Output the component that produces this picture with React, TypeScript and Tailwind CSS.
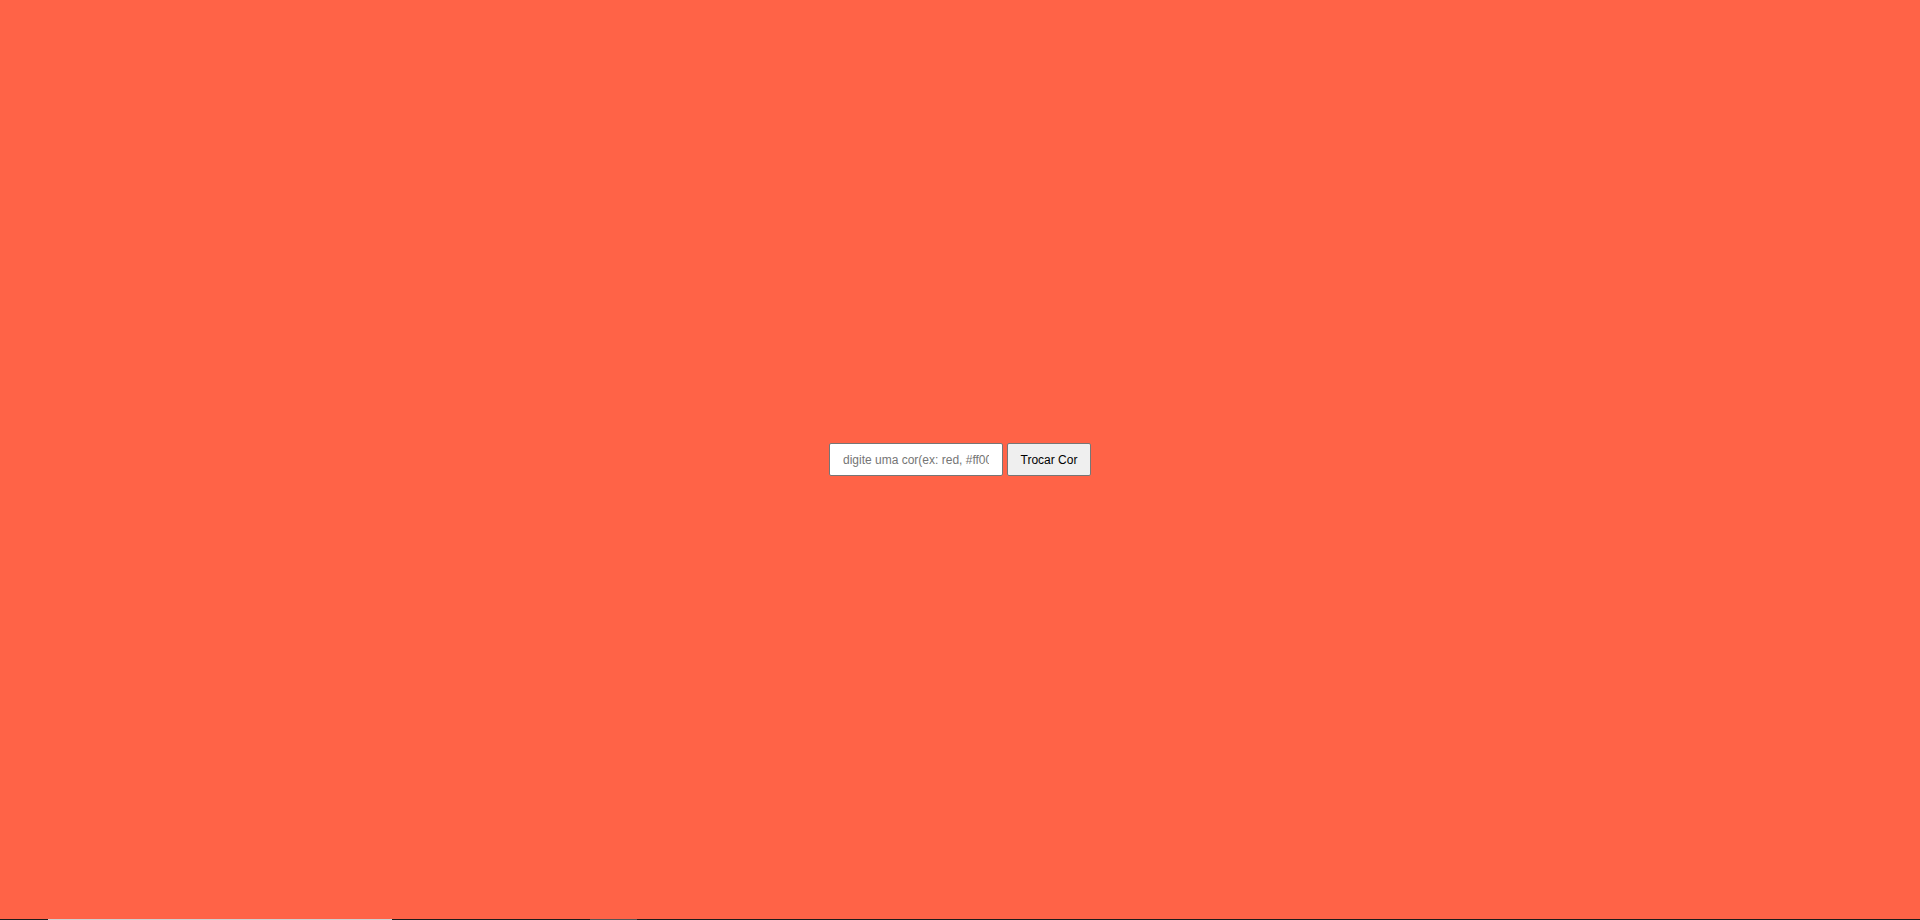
import React, { useState } from 'react';

const App: React.FC = () => {
  const [cor, setCor] = useState('');
  const [fundo, setFundo] = useState('tomato');

  const trocarCor = () => {
    if (cor.trim()) setFundo(cor.trim());
  };

  return (
    <div className="flex h-screen w-full flex-col" style={{ fontFamily: '"Liberation Sans", Arial, sans-serif' }}>
      {/* Area principal */}
      <div className="flex flex-1 items-center justify-center gap-[4px]" style={{ backgroundColor: fundo }}>
        <input
          type="text"
          value={cor}
          onChange={(e) => setCor(e.target.value)}
          placeholder="digite uma cor(ex: red, #ff0000)"
          className="h-[33px] w-[174px] rounded-[2px] border border-[#767676] bg-white px-[13px] text-[12px] text-black outline-none placeholder:text-[#757575]"
        />
        <button
          onClick={trocarCor}
          className="h-[33px] w-[84px] rounded-[2px] border border-[#767676] bg-[#efefef] text-[12px] text-black"
        >
          Trocar Cor
        </button>
      </div>

      {/* Linha inferior */}
      <div className="flex h-[1px] w-full bg-[#1c1c1c]">
        <div className="ml-[48px] w-[344px] bg-[#cfcfcf]" />
        <div className="ml-[198px] w-[47px] bg-[#555555]" />
      </div>
    </div>
  );
};

export default App;
